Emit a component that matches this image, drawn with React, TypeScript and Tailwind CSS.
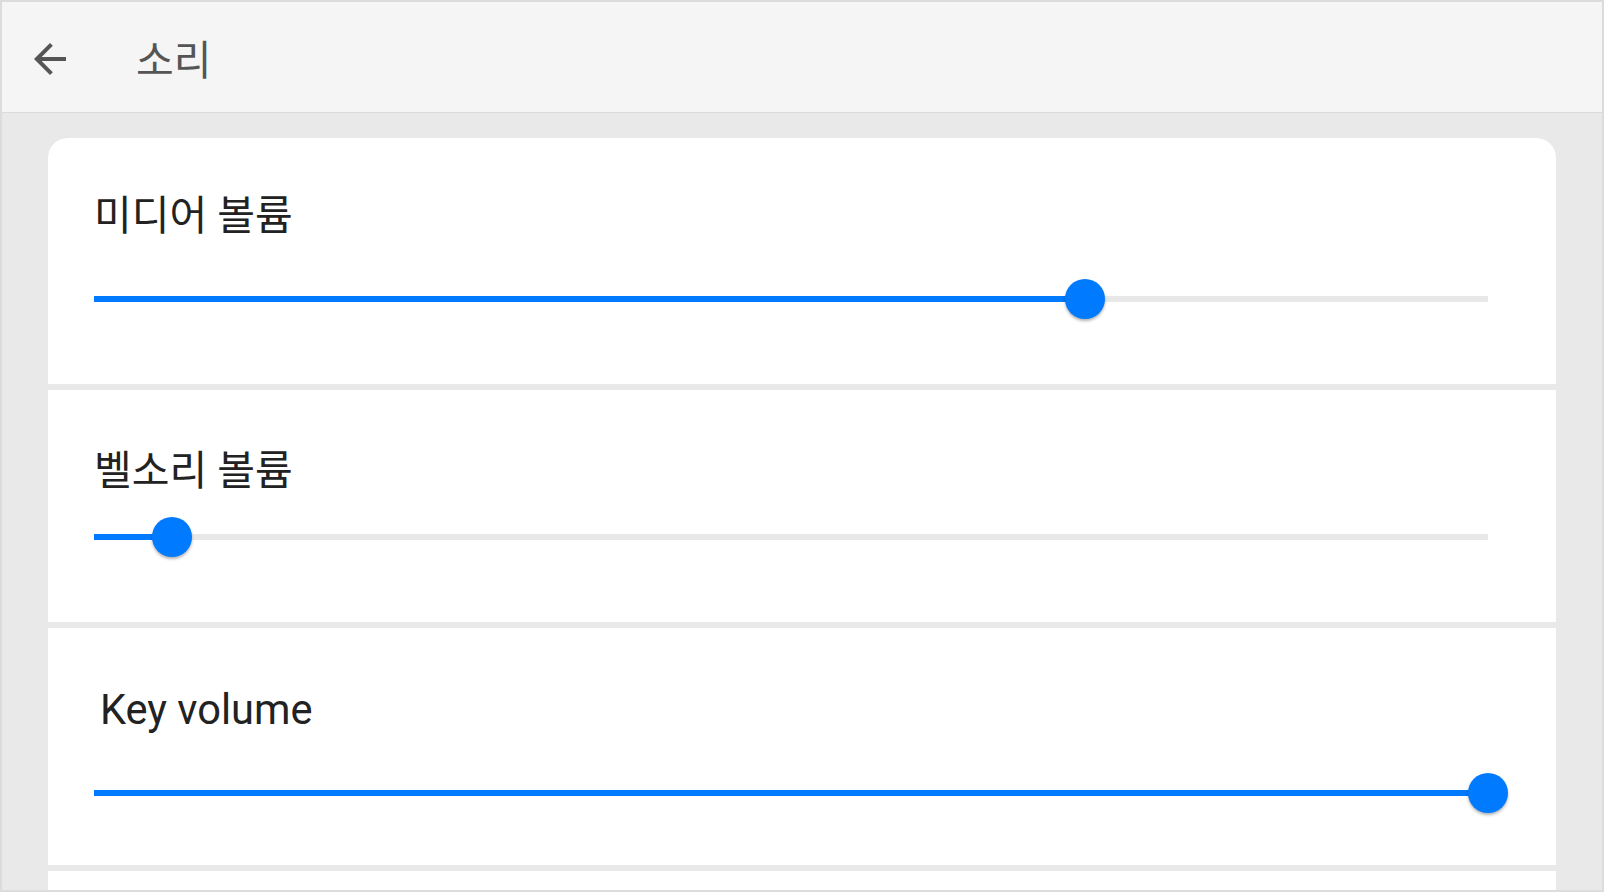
import React from 'react';

const font = { fontFamily: 'Roboto, "Noto Sans CJK KR", sans-serif' };

function Slider({ value }: { value: number }) {
  return (
    <div className="relative h-10 w-full">
      <div className="absolute left-0 right-0 top-[17px] h-[6px] bg-[#e8e8e8]" />
      <div className="absolute left-0 top-[17px] h-[6px] bg-[#007aff]" style={{ width: `${value}%` }} />
      <div
        className="absolute top-0 h-10 w-10 -translate-x-1/2 rounded-full bg-[#007aff] shadow-[0_2px_3px_rgba(0,0,0,0.3)]"
        style={{ left: `${value}%` }}
      />
    </div>
  );
}

export default function App() {
  return (
    <div className="flex h-[892px] w-[1604px] flex-col overflow-hidden border-2 border-[#dcdcdc] bg-[#e9e9e9]" style={font}>
      {/* header */}
      <div className="flex h-[111px] shrink-0 items-center border-b border-[#dadada] bg-[#f5f5f5] pl-6">
        <svg className="mt-[4px]" width="48" height="48" viewBox="0 0 24 24" fill="#555">
          <path d="M20 11H7.83l5.59-5.59L12 4l-8 8 8 8 1.41-1.41L7.83 13H20v-2z" />
        </svg>
        <span className="ml-[62px] mt-[8px] text-[41px] leading-[46px] text-[#555]">소리</span>
      </div>

      <div className="flex flex-col gap-[6px] px-[46px] pt-[25px]">
        <div className="rounded-t-[20px] bg-white pb-[65px] pl-[46px] pr-[68px] pt-[55px]">
          <div className="text-[41px] leading-[46px] text-[#222]">미디어 볼륨</div>
          <div className="mt-[40px]">
            <Slider value={71.1} />
          </div>
        </div>

        <div className="bg-white pb-[65px] pl-[46px] pr-[68px] pt-[58px]">
          <div className="text-[41px] leading-[46px] text-[#222]">벨소리 볼륨</div>
          <div className="mt-[23px]">
            <Slider value={5.6} />
          </div>
        </div>

        <div className="bg-white pb-[52px] pl-[46px] pr-[68px] pt-[59px]">
          <div className="pl-[6px] text-[41.6px] leading-[46px] text-[#222]">Key volume</div>
          <div className="mt-[40px]">
            <Slider value={100} />
          </div>
        </div>

        <div className="h-[40px] bg-white" />
      </div>
    </div>
  );
}
